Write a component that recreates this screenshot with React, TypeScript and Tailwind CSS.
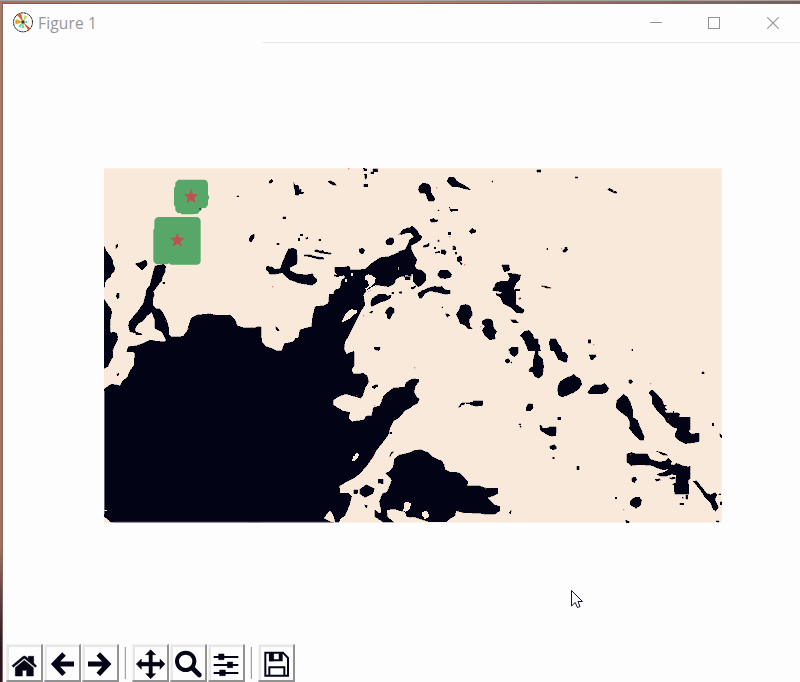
import React from "react";

const INK = "#020314";
const LAND = "#f9e9da";

type TileProps = { x: number; y: number; ink: string; land?: string };

/** A section of the map, drawn at three units per pixel. */
function Tile({ x, y, ink, land }: TileProps) {
  return (
    <g transform={`translate(${x - 104} ${y - 168}) scale(0.333333)`} shapeRendering="crispEdges">
      <path d={ink} fill={INK} stroke={INK} strokeWidth="0.8" />
      {land && <path d={land} fill={LAND} />}
    </g>
  );
}

const northWest = `M12 257L18 272 25 280 32 290 38 300 38 310 45 325 42 335 34 342 32 350 20 360 15 367 14 382H12Z
M48 256L54 252 53 262 47 268Z
M108 310L120 308 130 303 135 299 140 305 142 315 132 325 125 331 118 322 108 315Z
M50 400h8v12l-5 6-4-8Z
M12 418L18 425 25 437 34 447 35 460 31 480 30 500 32 520 40 516 50 520 54 532 48 545 42 552 38 572H12Z
M165 318L190 313 197 320 195 335 188 350 185 362 175 375 165 388 160 395 163 405 158 420 158 432 165 445 180 447 190 460 197 475 203 490 207 505 207 525 215 530 235 531 250 528 262 512 268 490 275 473 290 465 330 461 350 466 390 465 405 480 412 497 430 503 465 505 472 500H484V575H80L85 560 110 557 135 548 150 540 175 545 200 545 185 515 165 505 165 480 155 457 140 468 130 482 115 490 105 505 108 520 90 515 85 497 88 485 100 470 115 452 130 430 137 405 140 388 150 375 155 355 160 335Z
M107 516l18 5v3h-18ZM189 367h5v4h-5ZM411 107h6v4h-6ZM447 236L455 224 463 223 462 234 454 246 448 243Z
M298 143l6 0 0 7-5 3Z`;

const north = `M-4 503H25L28 525 35 545 48 560 65 574H96L105 550 130 547 145 535 150 510 165 505 185 500 188 470 195 440 220 437 235 430 238 403 250 402 255 390 270 385 275 360 285 352 283 346 265 348 254 335 254 322 280 322 297 318 302 330 345 328 365 310 390 293 415 290 440 280 465 270 475 250 484 240V350L470 345 450 350 438 358 432 372 415 380 380 375 370 385 360 392 345 397 340 405 345 435 335 450 325 470 315 490 305 510 295 530 285 545 280 574H-4Z
M58 63L64 58 70 62 63 70 57 69ZM131 65L135 75 145 76 148 90 154 86 154 96 161 97 160 101 147 101 144 107 136 104 135 91 132 82Z
M233 65L240 62 252 67 260 76 250 75 240 70ZM340 23l10 4v6h-8ZM368 26l16 0v9h-12v7h-10v-7h8ZM343 43h7v12l-4 3ZM342 73h12v8h-12Z
M98 171h9v5h-9ZM0 235L5 225 13 226 10 236 3 246H0ZM151 223h7v4h-7ZM145 235h4v7h-4ZM166 234l8-3v4l-6 3ZM207 238h5v4h-5ZM80 250h8v5h-8Z
M115 267L130 264 140 269 142 300 140 312 120 323 118 331 145 343 170 344 188 341 193 352 201 358 199 367 187 376 150 370 120 360 105 348 97 338 80 342 60 343 54 333 48 331 50 319 65 320 75 328 92 325 98 305Z
M163 284h15l22 6 22 3v5h-16l-24-7-19-3ZM195 270l8 0 8 3 8-3 3 6 22 3v4l-20-2-14-2-8-3h-7Z
M328 267l11-3 5 7-3 9-8 2-5-7ZM410 239l8-5h12l2 12-7 9-14-1-4-8ZM455 213l15-9h14v14l-15 1-15 5Z
M77 499l8 7 3 7-6 0-5-8ZM252 344l18 2-5 5-12-3Z
M362 432L365 417 385 403 405 402 412 408 424 405 421 415 406 423 390 427 378 433 366 440ZM358 457l6-4 6 2-5 5ZM411 448L420 440 432 445 433 458 425 466 420 478 411 475 412 464 405 459ZM448 396h7v4h-7ZM426 397h6v4h-6ZM372 562h18v8h-13Z M467 350h14v9h-11Z`;
const northLand = `M344 349L355 343 366 347 377 355 375 369 360 381 349 390 346 385 356 378 355 365 345 358Z
M348 392L365 382 377 376 376 383 360 391 351 398ZM275 485L285 465 300 450 309 445 310 451 322 448 320 458 300 475 278 487ZM285 357l7 2v7h-7ZM302 340h6v9h-6ZM443 322l22-2 3-6 14 0v12l-18 6-18-1Z`;

const northEast = `M55 90L58 78 68 70 85 71 93 83 92 96 105 116 102 124 87 124 80 112 79 101 60 99ZM141 62L147 52 163 52 169 62 180 69 207 84 212 90 194 87 175 81 158 81 147 72Z
M410 29h12v8h-12ZM275 63h4v4h-4ZM148 141l4 7h22v4h-14l-5 5-6-8ZM114 149h4v4h-4ZM90 179l10-4 4 4 10 0v4l-10 4h-10ZM207 213l10-8 6 4h5v7l-14 5ZM440 265h4v4h-4ZM144 217h8v7h-7ZM113 240h5v6h-5Z
M-4 224L10 208 28 206 36 198 43 203 53 212 57 223 65 229 64 238 50 248 38 254 25 256 28 267 35 270 44 288 51 300 44 318 50 328 64 330 77 342 77 362 67 374 55 381 40 365 39 344 22 334 12 350 28 351 28 358 16 359 14 348-4 350V274L18 268 24 255 28 240 41 230 33 219 18 218 5 222Z
M69 258l10-4 9-5v9l-17 5ZM106 277l14-4v6h-14ZM124 269h9l7 6-5 9-11-3ZM159 257l8 4v9h-8ZM166 277h5v6h-5ZM172 292l10-5 4 8-2 9-5-2 8 9-4 5-4-9-7-3ZM103 262h4v4h-4Z
M114 340L121 331 138 330 146 332 155 344 153 352 135 356 120 354 114 347ZM53 400L64 393 90 382 104 379 120 381 126 379 134 389 150 391 151 401 137 403 116 398 91 393 75 400 66 414 58 415ZM33 383l14-6-1 7-11 4ZM0 395h5v5h-5Z
M168 463L178 449 181 437 198 433 211 438 216 457 217 466 208 477 209 497 217 506 204 507 196 497 180 490 175 475ZM136 461l9 1 4 5-8 5ZM125 440h4v4h-4Z
M248 481L262 476 277 480 281 502 290 515 284 525 286 538 269 539 255 527 247 511 255 498 246 491ZM305 315l22-1 3 17-17 5ZM323 339L342 341 362 345 359 359 348 370 341 388 347 391 347 432 373 450 369 460 350 458 333 442 309 430 302 413 289 405 288 400 303 402 307 396 277 391 284 379 287 369 303 364 324 363 330 353ZM346 388h14v5h-14ZM356 414h8l-5 5ZM423 378l10-1 20 7-12 1ZM331 479l16 0 9 10-17-1ZM359 529L373 514 387 511 397 522 405 539 417 557 422 572H385L373 543 365 530ZM451 545L460 538 474 552 484 562V572H458ZM326 572l8-10h20v10Z`;

const east = `M76 51h8v4h-8ZM174 86l6-1 11 7 9 4v4l-9-1-12-7-6-3ZM38 270l6-3 1-5h7l1 8-6 7H39ZM114 540l8 0v10h-7ZM245 568h4v3h-4ZM-3 545L5 538 16 540 35 568V573H2Z`;

const south = `M12-4H54L45 14 38 32 38 52 30 65 24 80 12 86ZM12 148L22 140 35 132 60 137 68 122 82 112 90 92 103 75 104 40 98 33 82 30 85 20 100 20 120 17 135 7 155 2 195 6 200-5H486V547H32L24 538 12 530ZM49 104l8-5 0 4-4 5Z`;

const middle = `M-5-8L30-5 35 5 45 18 65 25 80 32 95 32 103 12 130 5 137-6H283V30L290 42 299 38 312 34 313 75 305 90 310 102 340 100 352 108 356 125 345 145 338 168 332 175 310 168 287 162 265 170 250 180 250 195 265 205 280 213 300 217 295 235 305 245 340 240 350 228 365 227 370 203 390 197 400 170 415 155 432 143 465 142 472 128 486 118V200L465 212 445 235 430 243 420 265 415 285 400 305 380 330 368 352 350 378 330 400 315 412 290 425 268 438 270 460 295 460 305 470 300 490 290 515 285 527 270 537 267 547H256L250 525 240 510 228 525 222 535 244 547H-5Z
M373 22h18l-5 10-12-3ZM365 141l9-6 8-2 2 6-7 3-4 5ZM385 418h15v13l-15-1ZM330 448L348 434 360 440 373 445 370 460 345 472 330 462ZM312 450h12l-2 12-10-1ZM342 494l12 3-5 8ZM420 277h5v4h-5ZM418 349l6-12 6-4-1 6-6 5-2 7Z
M486 337L470 340 445 347 433 357 430 380 418 395 407 400 422 415 425 422 420 435 412 455 397 462 388 485 395 517 388 520 375 510V530L385 537 400 547H432L412 530 410 510 430 507 460 513 465 500 463 490 486 486Z M467 518l8-14h10v28l-14-2Z`;
const middleLand = `M306 360L310 349 315 347 318 338 327 342 325 350 316 362 308 363Z`;

const southMiddle = `M-4 143L14 142 18 128 28 121 40 116 56 118 57 125 46 138 42 157 49 170 58 177 51 191 22 204 2 220-4 222Z
M-4 345L20 342 40 332 62 329 85 338 100 352 125 363 132 373 135 388 150 396 178 398 190 410 203 425 202 438 240 438 260 445 293 445 294 460 280 468 262 473 275 486 285 495 300 500 300 512 285 523 260 523 240 520 190 518 168 512 165 527 151 535 140 545 85 545 60 537 45 532 20 528 15 515-4 512Z
M326 28L333 23 355 22 354 41 343 51 332 43ZM317 58l10-2 3 10-8 4-6-5ZM332 66h3v4h-3ZM175 201L185 189 219 187 220 183 249 183V196L228 199 214 195 204 191 184 195 181 202ZM378 205L385 191 397 191 400 204 390 213 379 212ZM376-4H415V10L421 20 416 31 414 45 427 55 431 79 428 105 417 115 403 108 399 97 386 94 389 84 400 80 400 58 406 35 387 18ZM450-4H467L480 19 484 60 476 60 453 17ZM473 150l9-27v44ZM419 254l7 5 2 6 40-3 1 10-2 16-20-1-25-15ZM448 321l14-8 8 8-2 6-11 2ZM458 352h5v4h-5ZM357 251h5v4h-5ZM359 258h5v4h-5ZM473 232h10v8h-10ZM327 519l8-10-3 12Z`;
const southMiddleLand = `M65 525L67 516 80 513 88 524 86 532 75 538ZM12 488L22 485 32 490 31 505 22 512 18 516 10 513ZM196 190l5 4-5 3ZM206 190l6 3-6 6Z`;

const southEast = `M0 0H14L26 16 34 33 49 40 54 49 50 67 41 66 25 57 14 34 0 19ZM114-1h8v9h-6ZM117 44l20 0 2 7-8 4-1 5h-7ZM245 29h4v4h-4ZM455 96h8v5h-8ZM236 120l8-2 4 7-5 7-7-4Z
M24 140L28 128 45 115 63 108 71 103 80 110 89 115 96 131 88 146 70 158 52 166 36 171 26 166 23 152ZM113 159L121 144 134 134 155 134 164 130 177 145 169 158 155 162 118 162ZM198 200L201 181 221 163 231 170 240 184 248 210 248 232 262 240 270 261 283 290 280 302 270 300 256 288 238 266 240 245 232 231 215 218 202 208ZM22 233l11 2v5h-9ZM-4 260l22 0-1 27-15 2ZM0 317l14 0 6 7-9 5-11-4ZM80 379h8v10h-8ZM8 352h5v4h-5ZM487 250h5v7h-5ZM508 281l6 3 3 9h-5Z
M297 159L303 150 311 152 323 165 337 181 342 195 350 197 343 202 351 210 342 212 350 219 370 218 370 212 374 219 384 218 390 223 386 232H421V268L415 274 422 281 448 280V304L439 307 407 311 388 302 376 292V279L383 266 370 262 349 245 341 230 326 217 318 207 307 191 306 171Z
M230 342L245 337 258 342 292 341 301 358 328 366 345 363 355 355 365 365 362 373 372 376 379 369 397 377 415 380 421 379V416L415 422 417 463H374L372 434 366 433 377 429 379 405 365 403 347 409 331 409 320 403 344 396 357 387 340 390 321 384 303 376 266 374 244 377 231 367ZM317 333l13 3 18 6 6 4-14 0-13-8ZM316 418l14-2 2 4-14 4ZM358 413l18-1v4l-14 2ZM246 413l10-2 4 8-6 9-8-4ZM243 481L252 473 268 471 275 480 271 497 258 505 242 496 240 488ZM196 472h5v4h-5ZM397 471l5 3-3 3ZM408 466h5v12h-5ZM390 490h12v4h-12ZM430 424L440 422 454 440 470 460 483 464 495 457 501 465 495 479 506 501 497 514 488 507 482 488 463 470 454 454ZM507 461h5v4h-5ZM511 486h6v9h-6ZM226 540l12 4v4h-9ZM498 543l10 0v4h-8Z`;

const specks: [number, number][] = [
  [348, 168], [377, 169], [272, 286], [436, 187], [438, 241], [449, 236], [453, 247], [435, 253],
  [464, 264], [543, 286], [593, 344], [561, 248], [613, 191], [550, 287], [414, 367],
  [519, 298], [480, 326], [165, 320], [188, 328], [198, 314], [214, 314], [258, 326],
  [154, 267], [112, 350], [339, 486], [368, 381], [356, 395], [365, 416], [374, 405],
  [372, 457], [407, 381], [485, 488], [462, 512], [520, 427], [529, 370],
  [650, 383], [668, 418], [694, 442], [630, 454], [623, 509], [104, 391], [251, 327], [363, 315],
];

function MapImage() {
  return (
    <svg className="block h-[355px] w-[618px]" viewBox="0 0 618 355" aria-label="Land mask">
      <rect width="617.7" height="354.3" y="0.3" fill={LAND} />
      <Tile x={100} y={160} ink={northWest} />
      <Tile x={100} y={340} ink={south} land="M12 509h10v4H12Z" />
      <Tile x={250} y={160} ink={north} land={northLand} />
      <Tile x={250} y={340} ink={middle} land={middleLand} />
      <Tile x={400} y={160} ink={northEast} />
      <Tile x={400} y={340} ink={southMiddle} land={southMiddleLand} />
      <Tile x={550} y={160} ink={east} />
      <Tile x={550} y={340} ink={southEast} />
      <g fill="#c9566c" opacity="0.65">
        {specks.map(([x, y]) => (
          <rect key={`${x}-${y}`} x={x - 104} y={y - 168} width="1.3" height="1.3" />
        ))}
      </g>
      <g transform="translate(-4 -8) scale(0.333333)">
        <path fill="#57a868" d="M235 59H315Q324 63 324 73V103L328 113 324 121V134L317 144 304 144 300 153 293 161 277 163H246L241 159H233L226 151V140L222 135V85L226 78V68Z" />
        <path fill="#57a868" d="M175 171H291Q302 173 302 184V303Q301 313 292 314H213L207 310 200 313H175Q160 311 160 299V210L163 206V183Q165 173 175 171Z" />
        <path fill="#c44e52" stroke="#c44e52" strokeWidth="2" d="M273 89L278 103 292 104 281 113 285 127 273 119 261 127 265 113 254 104 268 103ZM232 220L237 234 252 235 240 244 244 258 232 250 219 258 224 244 212 235 227 234Z" />
        <path fill={INK} opacity="0.7" d="M298 144h4v5h-4Z" />
      </g>
      <rect x="0" y="224" width="0.6" height="122" fill="#a6a3aa" />
      <rect x="10" y="353.8" width="220" height="1" fill="#8d8b95" />
    </svg>
  );
}

function ToolButton({ label, box, children }: { label: string; box: string; children: React.ReactNode }) {
  return (
    <button aria-label={label} className="flex h-[38px] w-[37px] shrink-0 border-t border-r-2 border-b-2 border-l border-t-[#f3f3f3] border-r-[#929292] border-b-[#929292] border-l-[#f3f3f3] bg-[#fdfdfd]">
      <span className="block h-[35px] w-[34px] overflow-hidden border-t-2 border-l-2 border-[#e7e7e7]">
        <svg className="block h-[33px] w-[32px]" viewBox={box} fill={INK} stroke={INK} strokeWidth="1.5">
          {children}
        </svg>
      </span>
    </button>
  );
}

function Separator() {
  return <div className="mt-[3px] mr-[5px] ml-1 h-8 w-0.5 shrink-0 border-r border-l border-r-[#a5a5a5] border-l-[#e6e6e6]" />;
}

function Toolbar() {
  return (
    <div className="flex h-[38px] gap-px pl-[3px]">
      <ToolButton label="Home" box="27 37 96 99">
        <path d="M36 93L68 66Q73 62 78 66L85 72V65H101V85L110 94 106 98 73 71 40 98Z" />
        <path d="M46 99L73 77 100 99V124H80V107H67V124H46Z" />
      </ToolButton>
      <ToolButton label="Back" box="141 37 96 99">
        <path d="M192 58L163 88 192 119M166 88H222" fill="none" strokeWidth="15" />
      </ToolButton>
      <ToolButton label="Forward" box="255 37 96 99">
        <path d="M295 58L324 88 295 119M321 88H264" fill="none" strokeWidth="15" />
      </ToolButton>
      <Separator />
      <ToolButton label="Pan" box="405 37 96 99">
        <path d="M452 45L467 60H457V83H480V73L495 88 480 104V94H457V117H467L452 132 437 117H447V94H424V104L409 88 424 73V83H447V60H437Z" />
      </ToolButton>
      <ToolButton label="Zoom" box="519 37 96 99">
        <circle cx="557" cy="80" r="26" fill="none" strokeWidth="12" />
        <path d="M577 100L598 121" strokeWidth="14" strokeLinecap="round" />
      </ToolButton>
      <ToolButton label="Configure" box="633 37 96 99">
        <path d="M641 67H715M641 91H715M641 115H715" strokeWidth="6" />
        <path d="M656 58h16v17h-16ZM682 82h16v17h-16ZM659 106h17v17h-17Z" />
      </ToolButton>
      <Separator />
      <ToolButton label="Save" box="783 37 96 99">
        <path d="M796 54H849L864 70V123H796ZM808 122V98H853V122M810 55V77H845V55" fill="none" strokeWidth="6" />
        <path d="M808 54H821V79H808ZM837 57h6v18h-6Z" />
      </ToolButton>
    </div>
  );
}

function FigureIcon() {
  return (
    <svg className="h-[21px] w-[21px]" viewBox="0 0 63 63">
      <circle cx="30" cy="31" r="28.5" fill="#fdfdfd" stroke="#171717" strokeWidth="3" strokeDasharray="7 1.5" />
      <path d="M30 30L13 10Q19 3 25 6Z" fill="#e0641c" />
      <path d="M30 30L8 37Q5 29 9 22Z" fill="#e3a416" />
      <path d="M30 30L35 10 43 14Z" fill="#b5d96a" />
      <path d="M30 30L25 48H34Z" fill="#77da88" />
      <path d="M30 30L46 55 53 50Z" fill="#c9541f" />
      <path d="M30 30L16 42 22 47ZM30 30L43 27V34Z" fill="#6fc9ac" />
      <circle cx="30" cy="30" r="5" fill="#333f26" />
    </svg>
  );
}

export default function App() {
  return (
    <div className="relative flex h-[682px] w-[800px] flex-col overflow-hidden bg-[#fdfdfd]">
      <div className="h-[3px] shrink-0 border-t border-[#a3a3a3] bg-gradient-to-r from-[#a77162] via-[#b57c6a] to-[#765e57]" />
      <div className="flex min-h-0 flex-1">
        <div className="w-[3px] shrink-0 border-r border-[#846960] bg-gradient-to-b from-[#aa7869] via-[#a57061] via-80% to-[#25172a] to-95%" />
        <div className="flex min-w-0 flex-1 flex-col border-t border-[#77665f]">
          <header className="flex h-[38px] shrink-0">
            <div className="flex h-[37px] flex-1 items-center pl-[10px]">
              <FigureIcon />
              <h1 className="ml-1 font-['Open_Sans',sans-serif] text-[15.5px] leading-5 font-normal tracking-[0.15px] text-[#969696]">Figure 1</h1>
            </div>
            <div className="flex h-[37px] shrink-0 items-center gap-[46px] pr-[21px] text-[#949494]">
              <button aria-label="Minimize" className="flex h-3 w-3 items-center"><span className="h-px w-3 bg-current" /></button>
              <button aria-label="Maximize" className="h-3 w-3 border border-current" />
              <button aria-label="Close" className="ml-px h-3 w-3">
                <svg className="block h-3 w-3" viewBox="0 0 12 12"><path d="M.3.3l11.4 11.4M11.7.3L.3 11.7" stroke="currentColor" strokeWidth="1.1" /></svg>
              </button>
            </div>
          </header>
          <div className="ml-[260px] h-px shrink-0 bg-[#e6e6e6]" />
          <main className="min-h-0 flex-1 pt-[125px] pl-[101px]"><MapImage /></main>
          <Toolbar />
        </div>
      </div>
      <svg className="absolute top-[589px] left-[570px] h-5 w-3.5" viewBox="0 0 14 20" aria-hidden="true">
        <path d="M1.5 1.5V17L5.2 13.5 7.5 18.5 10 17.5 8 12.5H12.5Z" fill="#fff" stroke="#15151f" strokeWidth="1" />
      </svg>
    </div>
  );
}
